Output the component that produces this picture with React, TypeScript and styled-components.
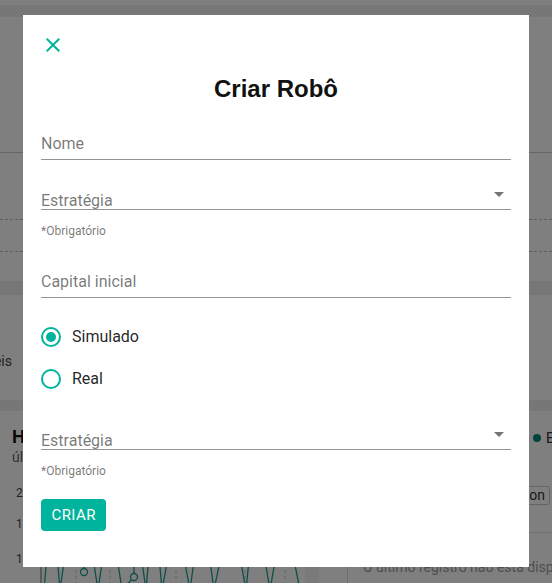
import React from "react";
import styled, { createGlobalStyle } from "styled-components";

const TEAL = "#00b39c";

const GlobalStyle = createGlobalStyle`
  html, body { margin: 0; padding: 0; }
  body {
    width: 552px;
    height: 583px;
    overflow: hidden;
    background: #ffffff;
    font-family: Roboto, "Liberation Sans", Arial, sans-serif;
  }
`;

/* ---------- background page ---------- */

const Page = styled.div`
  width: 552px;
  height: 583px;
  overflow: hidden;
  display: flex;
  flex-direction: column;
`;

const TopBar = styled.div`
  flex: none;
  margin-top: 5px;
  height: 12px;
  background: #eeeeee;
`;

const HeaderSection = styled.div`
  flex: none;
  height: 135px;
  border-bottom: 1px solid #cccccc;
`;

const FilterSection = styled.div`
  flex: none;
  height: 128px;
  box-sizing: border-box;
  padding-top: 66px;
  display: flex;
  flex-direction: column;
  gap: 31px;
`;

const DashedLine = styled.div`
  border-top: 1px dashed #bdbdbd;
`;

const Band = styled.div<{ $h: number }>`
  flex: none;
  height: ${(p) => p.$h}px;
  background: #eeeeee;
`;

const InfoSection = styled.div`
  flex: none;
  height: 105px;
  box-sizing: border-box;
  padding-top: 58px;
`;

const ClippedText = styled.div`
  width: 12px;
  overflow: hidden;
  display: flex;
  justify-content: flex-end;
  white-space: nowrap;
  font-size: 14px;
  line-height: 16px;
  color: #444444;
`;

const ChartSection = styled.div`
  flex: 1;
  display: grid;
  grid-template-columns: 347px 1fr;
  min-height: 0;
`;

const ChartColumn = styled.div`
  display: flex;
  flex-direction: column;
  padding-top: 16px;
  min-width: 0;
`;

const ChartTitle = styled.div`
  padding-left: 12px;
  font-family: "Liberation Sans", Arial, sans-serif;
  font-weight: bold;
  font-size: 18px;
  line-height: 21px;
  color: #111111;
  white-space: nowrap;
`;

const ChartSubtitle = styled.div`
  padding-left: 12px;
  margin-top: 1px;
  font-size: 14px;
  line-height: 16px;
  color: #666666;
`;

const ChartSvg = styled.svg`
  margin-top: 15px;
  display: block;
  flex: none;
`;

const SideColumn = styled.div`
  display: flex;
  flex-direction: column;
  padding-top: 16px;
  min-width: 0;
`;

const Legend = styled.div`
  margin-left: 186px;
  height: 21px;
  display: flex;
  align-items: center;
  gap: 5px;
  white-space: nowrap;
  font-size: 14px;
  color: #333333;
`;

const LegendDot = styled.span`
  width: 8px;
  height: 8px;
  border-radius: 50%;
  background: #00897b;
  flex: none;
`;

const ExportRow = styled.div`
  margin-top: 38px;
  display: flex;
  justify-content: flex-end;
  padding-right: 2px;
`;

const ExportButton = styled.div`
  height: 19px;
  box-sizing: border-box;
  border: 1px solid #c8c8c8;
  border-radius: 3px;
  padding: 0 4px;
  font-size: 14px;
  line-height: 17px;
  color: #333333;
  background: #ffffff;
`;

const MessageBlock = styled.div`
  margin-top: 27px;
  flex: 1;
  border-top: 1px solid #dddddd;
  border-left: 1px solid #dddddd;
  padding: 26px 0 0 15px;
`;

const MessageText = styled.div`
  font-size: 14px;
  line-height: 16px;
  color: #9e9e9e;
  white-space: nowrap;
`;

/* ---------- modal ---------- */

const Overlay = styled.div`
  position: fixed;
  inset: 0;
  background: rgba(0, 0, 0, 0.5);
  display: flex;
  justify-content: center;
  align-items: flex-start;
  padding-top: 15px;
`;

const Modal = styled.div`
  width: 506px;
  height: 552px;
  box-sizing: border-box;
  background: #ffffff;
  padding: 18px;
  display: flex;
  flex-direction: column;
`;

const CloseRow = styled.div`
  height: 24px;
  display: flex;
`;

const CloseButton = styled.button`
  width: 24px;
  height: 24px;
  padding: 0;
  border: none;
  background: transparent;
  color: ${TEAL};
  cursor: pointer;
  display: flex;
`;

const Title = styled.h2`
  margin: 18px 0 0;
  font-family: "Liberation Sans", Arial, sans-serif;
  font-weight: bold;
  font-size: 24px;
  line-height: 28px;
  color: #111111;
  text-align: center;
`;

const TextField = styled.div<{ $mt: number }>`
  margin-top: ${(p) => p.$mt}px;
  padding-bottom: 6px;
  border-bottom: 1px solid rgba(0, 0, 0, 0.42);
`;

const FieldLabel = styled.span`
  display: block;
  font-size: 16px;
  line-height: 19px;
  color: rgba(0, 0, 0, 0.54);
`;

const SelectField = styled.div<{ $mt: number }>`
  margin-top: ${(p) => p.$mt}px;
  height: 27px;
  display: flex;
  align-items: flex-end;
  justify-content: space-between;
  border-bottom: 1px solid rgba(0, 0, 0, 0.42);
`;

const SelectLabel = styled.span`
  font-size: 16px;
  line-height: 16px;
  color: rgba(0, 0, 0, 0.54);
`;

const ArrowIcon = styled.svg`
  align-self: flex-start;
  width: 24px;
  height: 24px;
  fill: rgba(0, 0, 0, 0.54);
  flex: none;
`;

const Helper = styled.div`
  margin-top: 13.5px;
  font-size: 12px;
  line-height: 14px;
  color: rgba(0, 0, 0, 0.54);
`;

const RadioGroup = styled.div`
  margin-top: 18px;
  display: flex;
  flex-direction: column;
`;

const RadioRow = styled.label`
  height: 42px;
  display: flex;
  align-items: center;
  gap: 11px;
  cursor: pointer;
`;

const RadioCircle = styled.span<{ $checked: boolean }>`
  width: 20px;
  height: 20px;
  box-sizing: border-box;
  border: 2px solid ${TEAL};
  border-radius: 50%;
  display: flex;
  align-items: center;
  justify-content: center;
  flex: none;

  &::after {
    content: "";
    width: 10px;
    height: 10px;
    border-radius: 50%;
    background: ${TEAL};
    display: ${(p) => (p.$checked ? "block" : "none")};
  }
`;

const RadioLabel = styled.span`
  font-size: 16px;
  line-height: 24px;
  color: rgba(0, 0, 0, 0.87);
`;

const SubmitRow = styled.div`
  margin-top: 21.5px;
  display: flex;
`;

const SubmitButton = styled.button`
  height: 32px;
  padding: 0 10.5px;
  border: none;
  border-radius: 4px;
  background: ${TEAL};
  color: #ffffff;
  font-family: Roboto, "Liberation Sans", Arial, sans-serif;
  font-size: 15px;
  letter-spacing: 0.43px;
  text-transform: uppercase;
  cursor: pointer;
`;

const DropArrow = () => (
  <ArrowIcon viewBox="0 0 24 24">
    <path d="M7 10l5 5 5-5z" />
  </ArrowIcon>
);

const zigzag = [
  [44, 110], [52, 14], [60, 110], [70, 40], [84, 88], [84, 20], [98, 110],
  [110, 30], [122, 110], [134, 97], [134, 25], [146, 110], [154, 18],
  [162, 110], [176, 35], [190, 110], [202, 22], [214, 110], [231, 28],
  [246, 110], [255, 20], [270, 110], [284, 30], [300, 110],
];

export default function App() {
  const radios = [
    { label: "Simulado", checked: true },
    { label: "Real", checked: false },
  ];

  return (
    <>
      <GlobalStyle />
      <Page>
        <TopBar />
        <HeaderSection />
        <FilterSection>
          <DashedLine />
          <DashedLine />
        </FilterSection>
        <Band $h={14} />
        <InfoSection>
          <ClippedText>disponíveis</ClippedText>
        </InfoSection>
        <Band $h={11} />
        <ChartSection>
          <ChartColumn>
            <ChartTitle>Histórico</ChartTitle>
            <ChartSubtitle>últimos 30 dias</ChartSubtitle>
            <ChartSvg width={347} height={110} viewBox="0 0 347 110">
              <g fontFamily="Roboto, sans-serif" fontSize="12" fill="#444">
                <text x="16" y="17">20</text>
                <text x="16" y="48">15</text>
                <text x="16" y="83">10</text>
              </g>
              <line x1="41" y1="0" x2="41" y2="110" stroke="#999" strokeWidth="1.5" />
              {[76, 110, 176, 245, 285].map((x) => (
                <line key={x} x1={x} y1="0" x2={x} y2="110" stroke="#c4c4c4" strokeDasharray="3 3" />
              ))}
              <rect x="305" y="0" width="14" height="110" fill="#f4f4f4" />
              <polyline
                points={zigzag.map((p) => p.join(",")).join(" ")}
                fill="none"
                stroke="#1f9e8c"
                strokeWidth="1.3"
              />
              <circle cx="84" cy="92" r="3.5" fill="#fff" stroke="#1f9e8c" strokeWidth="1.3" />
              <circle cx="134" cy="97" r="3.5" fill="#fff" stroke="#1f9e8c" strokeWidth="1.3" />
            </ChartSvg>
          </ChartColumn>
          <SideColumn>
            <Legend>
              <LegendDot />
              Estratégia
            </Legend>
            <ExportRow>
              <ExportButton>json</ExportButton>
            </ExportRow>
            <MessageBlock>
              <MessageText>O último registro não está disponível</MessageText>
            </MessageBlock>
          </SideColumn>
        </ChartSection>
      </Page>

      <Overlay>
        <Modal>
          <CloseRow>
            <CloseButton aria-label="Fechar">
              <svg width="24" height="24" viewBox="0 0 24 24" fill="currentColor">
                <path d="M19 6.41L17.59 5 12 10.59 6.41 5 5 6.41 10.59 12 5 17.59 6.41 19 12 13.41 17.59 19 19 17.59 13.41 12z" />
              </svg>
            </CloseButton>
          </CloseRow>
          <Title>Criar Robô</Title>

          <TextField $mt={31}>
            <FieldLabel>Nome</FieldLabel>
          </TextField>

          <SelectField $mt={22}>
            <SelectLabel>Estratégia</SelectLabel>
            <DropArrow />
          </SelectField>
          <Helper>*Obrigatório</Helper>

          <TextField $mt={34.5}>
            <FieldLabel>Capital inicial</FieldLabel>
          </TextField>

          <RadioGroup>
            {radios.map((r) => (
              <RadioRow key={r.label}>
                <RadioCircle $checked={r.checked} />
                <RadioLabel>{r.label}</RadioLabel>
              </RadioRow>
            ))}
          </RadioGroup>

          <SelectField $mt={22}>
            <SelectLabel>Estratégia</SelectLabel>
            <DropArrow />
          </SelectField>
          <Helper>*Obrigatório</Helper>

          <SubmitRow>
            <SubmitButton>Criar</SubmitButton>
          </SubmitRow>
        </Modal>
      </Overlay>
    </>
  );
}
